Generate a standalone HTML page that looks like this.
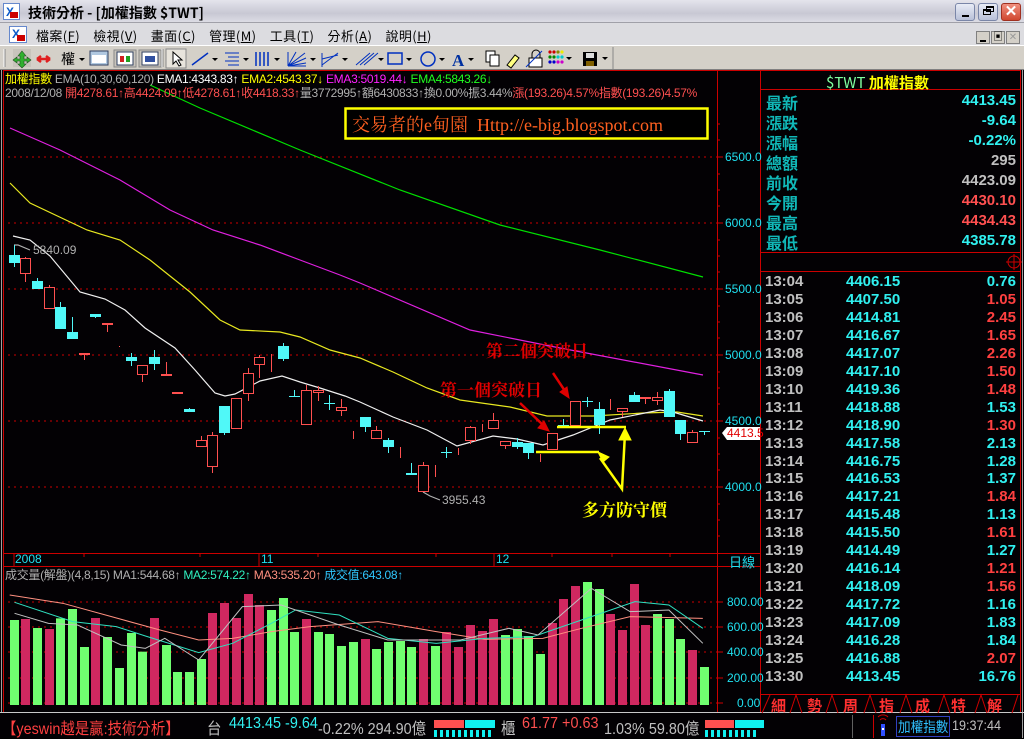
<!DOCTYPE html>
<html><head><meta charset="utf-8">
<style>
*{margin:0;padding:0;box-sizing:border-box}
body{width:1024px;height:738px;overflow:hidden;background:#000;font-family:"Liberation Sans","Noto Sans CJK TC",sans-serif;position:relative}
.a{position:absolute;white-space:nowrap}
.tb{left:0;top:0;width:1024px;height:23px;background:linear-gradient(#e4e4ec,#c8c8d4 60%,#dcdce4);border-bottom:1px solid #a0a0a8}
.mb{left:0;top:23px;width:1024px;height:22px;background:#dcdce0;font-size:13px;font-family:"Noto Sans CJK TC",sans-serif}
.tl{left:0;top:45px;width:1024px;height:25px;background:#d4d0c8;border-top:1px solid #fff;border-bottom:1px solid #808080}
.hd{font-size:12px;font-family:"Liberation Sans","Noto Sans CJK TC",sans-serif;letter-spacing:-0.3px}
.lab{color:#10b8b8;font-family:"Noto Sans CJK TC",sans-serif;font-size:16px;font-weight:bold;left:766px}
.val{right:8px;text-align:right;font-family:"Liberation Sans",sans-serif;font-size:15px;font-weight:bold}
.ax{color:#20e0f0;font-size:12px;left:725px}
.st{font-size:16px;top:715px;font-family:"Liberation Sans","Noto Sans CJK TC",sans-serif;transform:scaleX(0.9);transform-origin:left}
.btn{width:20px;height:18px;top:3px;border:1px solid #7a86a8;border-radius:3px;background:linear-gradient(#e8ecf6,#b8c0d8)}
</style></head><body>
<div class="a tb"></div>
<div class="a" style="left:3px;top:3px;width:17px;height:17px;background:#fff;border:1px solid #6688cc"><div style="position:absolute;left:2px;top:1px;color:#0a58c8;font-size:12px;font-weight:bold">X</div><div style="position:absolute;right:1px;bottom:1px;width:8px;height:6px;background:#c00"></div></div>
<div class="a" style="left:28px;top:3px;font-size:14px;font-weight:bold;font-family:'Noto Sans CJK TC',sans-serif;color:#000">技術分析 - [加權指數 $TWT]</div>
<div class="a btn" style="left:955px"><div style="position:absolute;left:6px;top:11px;width:7px;height:2px;background:#000"></div></div>
<div class="a btn" style="left:978px"><div style="position:absolute;left:4px;top:5px;width:8px;height:6px;border:1px solid #000;border-top-width:2px"></div><div style="position:absolute;left:7px;top:2px;width:8px;height:6px;border:1px solid #000;border-top-width:2px"></div></div>
<div class="a btn" style="left:1001px;background:linear-gradient(#f09080,#d04830);border-color:#a03020;color:#fff;font-size:15px;font-weight:bold;text-align:center;line-height:16px">✕</div>

<div class="a mb"></div>
<div class="a" style="left:9px;top:26px;width:18px;height:17px;background:#fff;border:1px solid #6688cc"><div style="position:absolute;left:2px;top:0;color:#0a58c8;font-size:12px;font-weight:bold">X</div><div style="position:absolute;right:1px;bottom:1px;width:8px;height:6px;background:#c00"></div></div>
<div class="a" style="left:36px;top:26px;font-size:13px;font-family:'Noto Sans CJK TC',sans-serif;letter-spacing:0.4px">檔案(<u>F</u>)&nbsp;&nbsp;&nbsp;&nbsp;檢視(<u>V</u>)&nbsp;&nbsp;&nbsp;&nbsp;畫面(<u>C</u>)&nbsp;&nbsp;&nbsp;&nbsp;管理(<u>M</u>)&nbsp;&nbsp;&nbsp;&nbsp;工具(<u>T</u>)&nbsp;&nbsp;&nbsp;&nbsp;分析(<u>A</u>)&nbsp;&nbsp;&nbsp;&nbsp;說明(<u>H</u>)</div>
<div class="a" style="left:976px;top:31px;width:14px;height:13px;background:#d4d0c8;border:1px solid #808080"><div style="position:absolute;left:3px;top:8px;width:6px;height:2px;background:#000"></div></div>
<div class="a" style="left:991px;top:31px;width:14px;height:13px;background:#d4d0c8;border:1px solid #808080;font-size:10px;text-align:center;line-height:11px">▣</div>
<div class="a" style="left:1006px;top:31px;width:14px;height:13px;background:#d4d0c8;border:1px solid #808080;color:#999;font-size:10px;text-align:center;line-height:11px">✕</div>

<div class="a tl"></div>
<svg class="a" style="left:0;top:45px" width="520" height="25">
<line x1="4" y1="4" x2="4" y2="22" stroke="#fff"/><line x1="5" y1="4" x2="5" y2="22" stroke="#888"/>
<rect x="13" y="4" width="18" height="18" fill="#c8c4bc"/>
<path d="M22 6 L26 11 L24 11 L24 14 L27 14 L27 12 L31 15 L27 18 L27 16 L24 16 L24 19 L26 19 L22 23 L18 19 L20 19 L20 16 L17 16 L17 18 L13 15 L17 12 L17 14 L20 14 L20 11 L18 11Z" fill="#30b030" stroke="#205020" stroke-width=".6"/>
<path d="M37 14 H50 M37 14 l4 -3 M37 14 l4 3 M50 14 l-4 -3 M50 14 l-4 3" stroke="#e02020" stroke-width="2.5" fill="none"/>
<text x="61" y="19" font-size="14" font-family="Noto Sans CJK TC">權</text><path d="M79 13 h6 l-3 3z" fill="#000"/>
<rect x="90" y="6" width="18" height="14" fill="#b0c8e0" stroke="#304060"/><rect x="92" y="10" width="14" height="8" fill="#fff"/>
<rect x="114" y="5" width="22" height="17" fill="#c8c4bc" stroke="#888"/><rect x="117" y="7" width="16" height="13" fill="#fff" stroke="#304060"/><rect x="120" y="11" width="4" height="6" fill="#d02020"/><rect x="126" y="11" width="4" height="6" fill="#20a020"/>
<rect x="139" y="5" width="22" height="17" fill="#c8c4bc" stroke="#888"/><rect x="142" y="7" width="16" height="13" fill="#fff" stroke="#304060"/><rect x="145" y="11" width="10" height="6" fill="#3050a0"/>
<line x1="162" y1="4" x2="162" y2="22" stroke="#fff"/><line x1="163" y1="4" x2="163" y2="22" stroke="#888"/>
<rect x="166" y="4" width="20" height="19" fill="#e8e4dc" stroke="#888"/>
<path d="M173 7 L173 19 L176 16 L179 21 L181 20 L178 15 L182 15Z" fill="#fff" stroke="#000"/>
<path d="M192 20 L208 8" stroke="#0030c0" stroke-width="1.5"/><path d="M212 13 h6 l-3 3z" fill="#000"/>
<path d="M225 8 h14 M228 12 h11 M225 16 h14 M228 20 h11" stroke="#0030c0"/><path d="M243 13 h6 l-3 3z" fill="#000"/>
<path d="M256 7 v14 M260 7 v14 M264 7 v14 M268 7 v14" stroke="#0030c0" stroke-width="1.5"/><path d="M274 13 h6 l-3 3z" fill="#000"/>
<path d="M288 21 L305 8 M288 21 L306 13 M288 21 L306 18 M288 21 L296 7 M288 21 h18 M288 7 v14" stroke="#0030c0"/><path d="M310 13 h6 l-3 3z" fill="#000"/>
<path d="M322 20 L338 8 M322 14 L338 10 M322 8 v14" stroke="#0030c0"/><path d="M342 13 h6 l-3 3z" fill="#000"/>
<path d="M356 20 L370 8 M360 20 L374 8 M364 20 L378 8" stroke="#0030c0"/><path d="M378 13 h6 l-3 3z" fill="#000"/>
<rect x="388" y="8" width="14" height="11" fill="none" stroke="#0030c0" stroke-width="1.5"/><path d="M406 13 h6 l-3 3z" fill="#000"/>
<circle cx="428" cy="14" r="7" fill="none" stroke="#0030c0" stroke-width="1.5"/><path d="M439 13 h6 l-3 3z" fill="#000"/>
<text x="452" y="21" font-size="17" font-weight="bold" fill="#0030a0" font-family="Liberation Serif">A</text><path d="M468 13 h6 l-3 3z" fill="#000"/>
<rect x="486" y="6" width="9" height="11" fill="#fff" stroke="#000"/><rect x="490" y="10" width="9" height="11" fill="#fff" stroke="#000"/>
<path d="M507 20 l8 -10 l4 3 l-8 10z" fill="#ffff80" stroke="#000"/>
</svg>
<svg class="a" style="left:520px;top:45px" width="100" height="25">
<rect x="9" y="13" width="13" height="9" fill="#fff" stroke="#000"/><path d="M12 13 v-4 a4 4 0 0 1 8 0 v4" fill="none" stroke="#000"/><path d="M6 22 L22 6" stroke="#0030c0"/>
<g fill="#c00"><circle cx="30" cy="7" r="1.6"/><circle cx="34" cy="7" r="1.6"/></g><circle cx="38" cy="7" r="1.6" fill="#880"/><circle cx="42" cy="7" r="1.6" fill="#ee0"/>
<g fill="#080"><circle cx="30" cy="12" r="1.6"/><circle cx="34" cy="12" r="1.6"/></g><circle cx="38" cy="12" r="1.6" fill="#0cc"/><circle cx="42" cy="12" r="1.6" fill="#0cc"/>
<g fill="#00c"><circle cx="30" cy="17" r="1.6"/><circle cx="34" cy="17" r="1.6"/></g><circle cx="38" cy="17" r="1.6" fill="#c0c"/><circle cx="42" cy="17" r="1.6" fill="#c0c"/>
<path d="M46 12 h6 l-3 3z" fill="#000"/>
<rect x="63" y="7" width="14" height="14" fill="#000"/><rect x="66" y="8" width="8" height="5" fill="#ddd"/><rect x="66" y="16" width="8" height="5" fill="#806000"/>
<path d="M82 12 h6 l-3 3z" fill="#000"/>
<line x1="93" y1="2" x2="93" y2="24" stroke="#888"/>
</svg>

<svg class="a" style="left:0;top:70px" width="1024" height="668">
<g transform="translate(0,-70)">
<rect x="0" y="70" width="1024" height="668" fill="#030104"/>
<line x1="1.5" y1="70" x2="1.5" y2="712" stroke="#a0a0a0"/><line x1="3.5" y1="70" x2="3.5" y2="712" stroke="#c00"/>
<line x1="1022.5" y1="70" x2="1022.5" y2="738" stroke="#a0a0a0"/>
<line x1="717.5" y1="70" x2="717.5" y2="712" stroke="#c00"/>
<line x1="760.5" y1="70" x2="760.5" y2="712" stroke="#c00"/>
<line x1="1020.5" y1="70" x2="1020.5" y2="712" stroke="#c00"/>
<line x1="4" y1="70.5" x2="1020" y2="70.5" stroke="#c00"/>
<g stroke="#c00" stroke-dasharray="2 4">
<line x1="8" y1="157" x2="717" y2="157"/><line x1="8" y1="223" x2="717" y2="223"/><line x1="8" y1="289" x2="717" y2="289"/><line x1="8" y1="355" x2="717" y2="355"/><line x1="8" y1="421" x2="717" y2="421"/><line x1="8" y1="487" x2="717" y2="487"/>
<line x1="8" y1="602" x2="717" y2="602"/><line x1="8" y1="627" x2="717" y2="627"/><line x1="8" y1="652" x2="717" y2="652"/><line x1="8" y1="678" x2="717" y2="678"/><line x1="8" y1="703" x2="717" y2="703"/>
</g>
<g stroke="#c00"><path d="M717 157h6M717 223h6M717 289h6M717 355h6M717 421h6M717 487h6M717 602h6M717 627h6M717 652h6M717 678h6M717 703h6"/>
<path d="M717 124h3M717 140h3M717 174h3M717 190h3M717 206h3M717 240h3M717 256h3M717 272h3M717 306h3M717 322h3M717 338h3M717 372h3M717 388h3M717 404h3M717 438h3M717 454h3M717 470h3M717 504h3M717 520h3M717 536h3"/></g>
<line x1="4" y1="553.5" x2="760" y2="553.5" stroke="#c00"/><line x1="4" y1="566.5" x2="760" y2="566.5" stroke="#c00"/>
<g stroke="#c00"><path d="M14 553v13M84 553v4M200 553v4M259 553v13M318 553v4M436 553v4M494 553v13M552 553v4M612 553v4M670 553v4"/></g>
<g fill="none" stroke-width="1.2">
<polyline stroke="#00e000" points="150,85 200,108 300,150 400,190 500,225 600,250 703,277"/>
<polyline stroke="#e020e0" points="10,128 60,150 120,180 170,210 213,230 260,245 300,260 340,275 360,283 470,330 560,348 703,375"/>
<polyline stroke="#e8e820" points="10,183 30,203 87,230 120,240 150,260 190,292 220,320 240,330 280,332 300,337 330,350 360,358 393,372 427,388 460,400 510,407 547,416 593,416 643,413 677,412 703,416"/>
<polyline stroke="#f0f0f0" points="13,236 30,240 50,256 80,292 105,299 125,310 145,328 175,348 195,370 215,393 225,396 235,394 260,381 282,376 300,382 320,388 345,396 360,402 393,417 427,430 457,446 493,436 517,439 543,445 573,435 610,420 660,410 673,412 703,421"/>
<polyline stroke="#b0b0b0" points="14,245 18,245 30,250"/>
<polyline stroke="#b0b0b0" points="423,492 430,496 440,500"/>
</g>
<g id="cand"></g>
<g id="vol"></g>
<g fill="none" stroke-width="1">
<polyline stroke="#ff9080" transform="translate(0,550) scale(0.4847,0.3333)" vector-effect="non-scaling-stroke" points="20,135 130,160 230,200 330,240 410,270 480,265 560,245 640,230 780,215 900,245 1000,268 1120,265 1200,235 1300,200 1450,205"/>
<polyline stroke="#30e0c0" transform="translate(0,550) scale(0.4847,0.3333)" vector-effect="non-scaling-stroke" points="30,157 150,215 240,230 300,258 410,308 480,280 560,220 610,180 700,195 800,265 900,280 1000,265 1100,260 1220,200 1310,155 1380,165 1450,235"/>
<polyline stroke="#c0c0c0" transform="translate(0,550) scale(0.4847,0.3333)" vector-effect="non-scaling-stroke" points="30,190 100,220 160,225 250,285 300,295 340,265 410,330 500,170 580,165 700,225 800,270 950,270 1050,235 1110,255 1220,115 1300,185 1380,180 1450,280"/>
</g>
<g stroke="#ffff00" stroke-width="2.5" fill="#ffff00">
<line x1="536" y1="452" x2="599" y2="452"/><line x1="557" y1="427" x2="626" y2="427"/>
<polyline fill="none" points="600,458 622,489 625,433"/>
<path d="M598 452 l11 5 l-6 5z" stroke-width="1"/><path d="M625 428 l-6 12 l12 0z" stroke-width="1"/>
</g>
<g stroke="#e00000" stroke-width="2.5" fill="#e00000">
<line x1="520" y1="403" x2="543" y2="425"/><path d="M549 431 l-11 -3 l6 -7z" stroke-width="1"/>
<line x1="553" y1="373" x2="565" y2="391"/><path d="M569 398 l-9 -6 l7 -5z" stroke-width="1"/>
</g>
<rect x="345.5" y="108.5" width="362" height="30" fill="#000" stroke="#ffff00" stroke-width="2.5"/>
<path d="M722 433 l5 -6 h33 v13 h-33z" fill="#fff"/>
<line x1="760" y1="89.5" x2="1020" y2="89.5" stroke="#c00"/>
<line x1="760" y1="252.5" x2="1020" y2="252.5" stroke="#c00"/>
<line x1="760" y1="271.5" x2="1020" y2="271.5" stroke="#c00"/>
<line x1="760" y1="694.5" x2="1020" y2="694.5" stroke="#c00"/>
<line x1="760" y1="712.5" x2="1020" y2="712.5" stroke="#c00"/>
<line x1="0" y1="712.5" x2="1024" y2="712.5" stroke="#c8c8c8"/>
<circle cx="1014" cy="262" r="6" fill="none" stroke="#c00"/><path d="M1006 262h16M1014 254v16" stroke="#c00"/>
<g stroke="#c00" fill="none"><path d="M762 713 l8 -18 M790 713 l6 -18 l6 18 M826 713 l6 -18 l6 18 M864 713 l6 -18 l6 18 M900 713 l6 -18 l6 18 M938 713 l6 -18 l6 18 M975 713 l6 -18 l6 18 M1012 713 l6 -18"/></g>
<rect x="434" y="720" width="30" height="8" fill="#ff5050"/><rect x="465" y="720" width="30" height="8" fill="#10f0f0"/>
<g fill="#10f0f0"><rect x="434" y="730" width="3" height="7"/><rect x="440" y="730" width="3" height="7"/><rect x="446" y="730" width="3" height="7"/><rect x="452" y="730" width="3" height="7"/><rect x="458" y="730" width="3" height="7"/><rect x="464" y="730" width="3" height="7"/><rect x="470" y="730" width="3" height="7"/><rect x="476" y="730" width="3" height="7"/><rect x="482" y="730" width="3" height="7"/><rect x="488" y="730" width="3" height="7"/></g>
<rect x="705" y="720" width="29" height="8" fill="#ff5050"/><rect x="735" y="720" width="29" height="8" fill="#10f0f0"/>
<g fill="#10f0f0"><rect x="705" y="730" width="3" height="7"/><rect x="711" y="730" width="3" height="7"/><rect x="717" y="730" width="3" height="7"/><rect x="723" y="730" width="3" height="7"/><rect x="729" y="730" width="3" height="7"/><rect x="735" y="730" width="3" height="7"/><rect x="741" y="730" width="3" height="7"/><rect x="747" y="730" width="3" height="7"/><rect x="753" y="730" width="3" height="7"/></g>
<line x1="852.5" y1="715" x2="852.5" y2="738" stroke="#606060"/>
<line x1="873.5" y1="715" x2="873.5" y2="738" stroke="#c00"/>
<path d="M880 720 a4 4 0 0 1 6 0 M878 717 a7 7 0 0 1 10 0" stroke="#c00" fill="none"/><rect x="881" y="724" width="4" height="12" fill="#3050ff"/><rect x="882" y="728" width="2" height="2" fill="#fff"/>
<rect x="896.5" y="716.5" width="53" height="20" fill="none" stroke="#3040c0"/>
</g>
</svg>
<script>
var C=[[255,263,245,267,'c'],[258,274,257,282,'r'],[281,289,278,289,'c'],[287,309,285,309,'r'],[307,329,302,329,'c'],[332,339,317,339,'c'],[353,355,353,360,'r'],[314,317,314,318,'c'],[323,325,323,332,'r'],[346,347,346,347,'r'],[357,361,353,366,'c'],[365,375,365,382,'r'],[357,364,350,370,'c'],[374,376,362,376,'r'],[392,394,392,394,'r'],[409,412,408,412,'c'],[440,447,436,447,'r'],[435,467,432,473,'r'],[406,433,406,435,'c'],[398,429,398,429,'r'],[373,394,368,401,'r'],[357,365,355,378,'r'],[357,358,354,372,'r'],[346,359,343,361,'c'],[396,397,390,397,'c'],[390,425,385,425,'r'],[390,393,386,401,'r'],[403,404,395,410,'c'],[407,411,399,416,'r'],[431,432,431,439,'r'],[417,427,417,432,'c'],[430,439,426,439,'r'],[440,447,438,453,'c'],[452,453,447,458,'r'],[473,475,463,475,'c'],[465,492,462,492,'r'],[467,468,465,477,'r'],[452,453,447,458,'c'],[452,453,448,455,'r'],[427,441,426,444,'r'],[427,428,424,432,'r'],[420,429,413,429,'r'],[441,446,441,449,'r'],[442,447,438,449,'c'],[443,453,443,459,'c'],[457,458,454,462,'r'],[433,450,433,450,'r'],[425,426,419,426,'c'],[401,426,401,426,'r'],[401,402,397,407,'c'],[409,425,402,434,'c'],[407,408,399,410,'r'],[408,412,408,417,'r'],[395,402,392,402,'c'],[397,399,397,404,'r'],[397,401,392,405,'r'],[391,417,389,417,'c'],[420,434,420,440,'c'],[432,443,430,443,'r'],[431,432,431,435,'c']];
var V=[[210,'g'],[207,'r'],[234,'g'],[237,'r'],[205,'g'],[177,'g'],[291,'g'],[204,'r'],[261,'g'],[354,'g'],[249,'g'],[305,'g'],[204,'r'],[285,'g'],[366,'g'],[366,'g'],[327,'g'],[189,'r'],[159,'r'],[204,'r'],[132,'r'],[165,'r'],[180,'g'],[144,'g'],[246,'g'],[207,'r'],[246,'g'],[252,'g'],[288,'g'],[276,'g'],[267,'r'],[297,'g'],[276,'g'],[273,'g'],[291,'g'],[267,'r'],[288,'g'],[246,'r'],[291,'r'],[225,'r'],[243,'r'],[207,'r'],[255,'g'],[237,'g'],[258,'g'],[312,'g'],[219,'r'],[147,'r'],[108,'r'],[96,'g'],[117,'g'],[192,'r'],[240,'r'],[102,'r'],[225,'r'],[192,'g'],[207,'g'],[267,'g'],[300,'r'],[351,'g']];
var s='',v='';
C.forEach(function(d,i){var x=Math.round(13.5+i*11.7);var col=d[4]=='c'?'#50f8f8':'#ff5050';
s+='<line x1="'+(x+.5)+'" y1="'+d[2]+'" x2="'+(x+.5)+'" y2="'+d[3]+'" stroke="'+col+'"/>';
var h=Math.max(d[1]-d[0],1);
if(d[4]=='c')s+='<rect x="'+(x-5)+'" y="'+d[0]+'" width="11" height="'+h+'" fill="'+col+'"/>';
else s+='<rect x="'+(x-4.5)+'" y="'+(d[0]+.5)+'" width="10" height="'+(h-1<0?0:h-1)+'" fill="#030104" stroke="'+col+'"/>';});
V.forEach(function(d,i){var x=Math.round(13.5+i*11.7);var y=550+d[0]/3;
v+='<rect x="'+(x-4)+'" y="'+y+'" width="9" height="'+(705-y)+'" fill="'+(d[1]=='g'?'#70ff70':'#d02860')+'"/>';});
document.getElementById('cand').innerHTML=s;document.getElementById('vol').innerHTML=v;
</script>

<div class="a hd" style="left:5px;top:70px"><span style="color:#ffff00">加權指數</span> <span style="color:#b0b0b0">EMA(10,30,60,120)</span> <span style="color:#fff">EMA1:4343.83↑</span> <span style="color:#ffff00">EMA2:4543.37↓</span> <span style="color:#ff20ff">EMA3:5019.44↓</span> <span style="color:#20ff20">EMA4:5843.26↓</span></div>
<div class="a hd" style="left:5px;top:84px;color:#b0b0b0">2008/12/08 <span style="color:#ff5050">開4278.61↑高4424.09↑低4278.61↑收4418.33↑</span>量3772995↑額6430833↑換0.00%振3.44%<span style="color:#ff5050">漲(193.26)4.57%指數(193.26)4.57%</span></div>
<div class="a" style="left:352px;top:111px;font-family:'Liberation Serif','Noto Serif CJK SC',serif;font-size:18px;color:#ff6020">交易者的e甸園&nbsp;&nbsp;Http://e-big.blogspot.com</div>
<div class="a" style="left:33px;top:243px;color:#b0b0b0;font-size:12px">5840.09</div>
<div class="a" style="left:442px;top:493px;color:#b0b0b0;font-size:12px">3955.43</div>
<div class="a" style="left:486px;top:337px;color:#e00000;font-size:17px;font-weight:bold;font-family:'Noto Serif CJK SC',serif">第二個突破日</div>
<div class="a" style="left:440px;top:376px;color:#e00000;font-size:17px;font-weight:bold;font-family:'Noto Serif CJK SC',serif">第一個突破日</div>
<div class="a" style="left:582px;top:496px;color:#ffff00;font-size:17px;font-weight:bold;font-family:'Noto Serif CJK SC',serif">多方防守價</div>
<div class="a ax" style="top:150px">6500.0</div><div class="a ax" style="top:216px">6000.0</div><div class="a ax" style="top:282px">5500.0</div><div class="a ax" style="top:348px">5000.0</div><div class="a ax" style="top:414px">4500.0</div><div class="a ax" style="top:480px">4000.0</div>
<div class="a" style="left:727px;top:426px;color:#e00000;font-size:12px">4413.5</div>
<div class="a ax" style="top:595px;left:727px">800.00</div><div class="a ax" style="top:620px;left:727px">600.00</div><div class="a ax" style="top:645px;left:727px">400.00</div><div class="a ax" style="top:671px;left:727px">200.00</div><div class="a ax" style="top:696px;left:737px">0.00</div>
<div class="a" style="left:15px;top:552px;color:#20e0f0;font-size:12px">2008</div>
<div class="a" style="left:261px;top:552px;color:#20e0f0;font-size:12px">11</div>
<div class="a" style="left:496px;top:552px;color:#20e0f0;font-size:12px">12</div>
<div class="a" style="left:729px;top:552px;color:#20e0f0;font-size:13px;font-family:'Noto Sans CJK TC',sans-serif">日線</div>
<div class="a hd" style="left:5px;top:566px;color:#b0b0b0">成交量(解盤)(4,8,15) MA1:544.68↑ <span style="color:#30f0c0">MA2:574.22↑</span> <span style="color:#ff9080">MA3:535.20↑</span> <span style="color:#30c8ff">成交值:643.08↑</span></div>

<div class="a" style="left:826px;top:72px;font-size:15px;font-weight:bold;font-family:'Noto Sans CJK TC',sans-serif"><span style="color:#80ffa0;font-weight:normal">$TWT</span> <span style="color:#ffff00">加權指數</span></div>
<div class="a lab" style="top:90px">最新</div><div class="a val" style="top:92px;color:#30f0f0">4413.45</div>
<div class="a lab" style="top:110px">漲跌</div><div class="a val" style="top:112px;color:#30f0f0">-9.64</div>
<div class="a lab" style="top:130px">漲幅</div><div class="a val" style="top:132px;color:#30f0f0">-0.22%</div>
<div class="a lab" style="top:150px">總額</div><div class="a val" style="top:152px;color:#c0c0c0">295</div>
<div class="a lab" style="top:170px">前收</div><div class="a val" style="top:172px;color:#c0c0c0">4423.09</div>
<div class="a lab" style="top:190px">今開</div><div class="a val" style="top:192px;color:#ff5050">4430.10</div>
<div class="a lab" style="top:210px">最高</div><div class="a val" style="top:212px;color:#ff5050">4434.43</div>
<div class="a lab" style="top:230px">最低</div><div class="a val" style="top:232px;color:#30f0f0">4385.78</div>
<div id="tk"></div>
<script>
var T=[['13:04','4406.15','0.76','c'],['13:05','4407.50','1.05','r'],['13:06','4414.81','2.45','r'],['13:07','4416.67','1.65','r'],['13:08','4417.07','2.26','r'],['13:09','4417.10','1.50','r'],['13:10','4419.36','1.48','r'],['13:11','4418.88','1.53','c'],['13:12','4418.90','1.30','r'],['13:13','4417.58','2.13','c'],['13:14','4416.75','1.28','c'],['13:15','4416.53','1.37','c'],['13:16','4417.21','1.84','r'],['13:17','4415.48','1.13','c'],['13:18','4415.50','1.61','r'],['13:19','4414.49','1.27','c'],['13:20','4416.14','1.21','r'],['13:21','4418.09','1.56','r'],['13:22','4417.72','1.16','c'],['13:23','4417.09','1.83','c'],['13:24','4416.28','1.84','c'],['13:25','4416.88','2.07','r'],['13:30','4413.45','16.76','c']];
var h='';T.forEach(function(r,i){var y=273+i*17.95;
h+='<div class="a" style="left:765px;top:'+y+'px;color:#c0c0c0;font-size:15px;font-weight:bold">'+r[0]+'</div><div class="a" style="left:846px;top:'+y+'px;color:#30f0f0;font-size:15px;font-weight:bold">'+r[1]+'</div><div class="a val" style="top:'+y+'px;color:'+(r[3]=='c'?'#30f0f0':'#ff4040')+'">'+r[2]+'</div>';});
document.getElementById('tk').innerHTML=h;
</script>
<div class="a" style="left:771px;top:695px;color:#ff3030;font-size:15px;font-weight:bold;font-family:'Noto Sans CJK TC',sans-serif;letter-spacing:21px">細勢周指成特解</div>

<div class="a st" style="left:2px;color:#ff4040">【yeswin越是贏:技術分析】</div>
<div class="a st" style="left:207px;color:#c0c0c0">台</div>
<div class="a st" style="left:229px;color:#30f0f0">4413.45 -9.64</div>
<div class="a st" style="left:318px;color:#c0c0c0">-0.22% 294.90億</div>
<div class="a st" style="left:501px;color:#c0c0c0">櫃</div>
<div class="a st" style="left:522px;color:#ff5050">61.77 +0.63</div>
<div class="a st" style="left:604px;color:#c0c0c0">1.03% 59.80億</div>
<div class="a st" style="left:898px;color:#30c0ff;font-size:14px;top:717px">加權指數</div>
<div class="a st" style="left:952px;color:#c0c0c0;font-size:14px;top:717px">19:37:44</div>
</body></html>
